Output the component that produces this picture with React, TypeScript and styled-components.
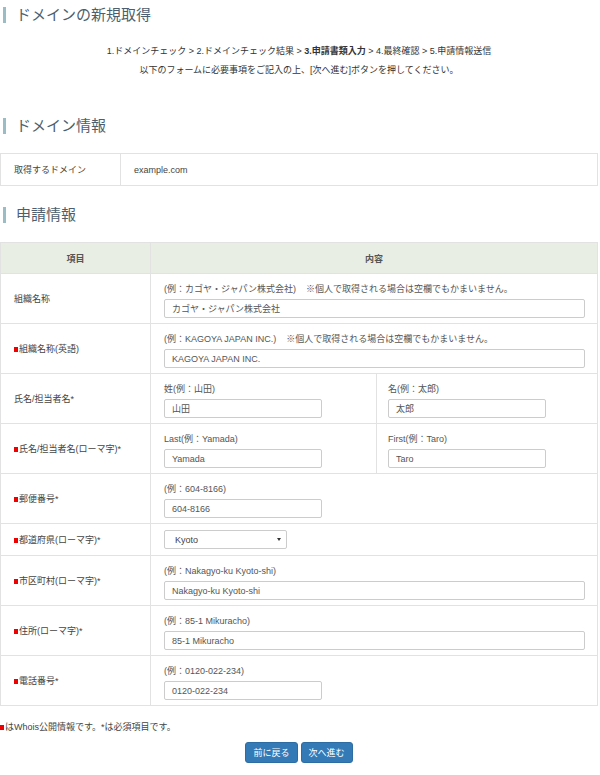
import React from 'react';
import styled, { createGlobalStyle } from 'styled-components';

const GlobalStyle = createGlobalStyle`
  html, body {
    margin: 0;
    padding: 0;
    background: #fff;
  }
  body {
    font-family: "Liberation Sans", "Noto Sans CJK JP", sans-serif;
    font-size: 9px;
    color: #444;
  }
`;

const Page = styled.div`
  width: 598px;
  padding-top: 7px;
  padding-bottom: 12px;
`;

const SectionTitle = styled.h2<{ $gapTop?: number }>`
  margin: ${({ $gapTop }) => $gapTop ?? 0}px 0 0 3px;
  padding-left: 10px;
  border-left: 3px solid #9bbcc5;
  font-size: 15px;
  line-height: 16px;
  font-weight: normal;
  color: #4d5f6e;
`;

const Steps = styled.div`
  margin-top: 19px;
  text-align: center;
  line-height: 19px;
  color: #333;
`;

const Table = styled.table<{ $gapTop: number }>`
  width: 598px;
  margin-top: ${({ $gapTop }) => $gapTop}px;
  border-collapse: collapse;
  table-layout: fixed;
`;

const Th = styled.th`
  height: 30px;
  padding: 0;
  background: #e9eee5;
  border: 1px solid #e2e2e2;
  font-weight: bold;
  color: #555;
  text-align: center;
`;

const Label = styled.td`
  height: 31px;
  padding: 0 13px;
  border: 1px solid #e2e2e2;
  color: #444;
  vertical-align: middle;
`;

const Cell = styled.td<{ $compact?: boolean; $tight?: boolean }>`
  padding: ${({ $compact }) => ($compact ? '6px 13px 6px' : '8px 12px 5px')};
  padding-left: ${({ $tight }) => ($tight ? 11 : 13)}px;
  border: 1px solid #e2e2e2;
  vertical-align: top;
`;

const Whois = styled.span`
  display: inline-block;
  width: 4px;
  height: 5px;
  margin-right: 1px;
  background: #ee0000;
  vertical-align: 0;
`;

const Hint = styled.div`
  line-height: 14px;
  margin-bottom: 3px;
  color: #555;
  white-space: nowrap;
`;

const Note = styled.span`
  margin-left: 10px;
`;

const Input = styled.input<{ $w?: number }>`
  box-sizing: border-box;
  display: block;
  width: ${({ $w }) => ($w ? `${$w}px` : '100%')};
  height: 19px;
  padding: 0 7px;
  border: 1px solid #ccc;
  border-radius: 2px;
  font: inherit;
  color: #555;
  background: #fff;
  outline: none;
`;

const SelectWrap = styled.div`
  position: relative;
  width: 123px;
  &::after {
    content: '';
    position: absolute;
    right: 6px;
    top: 8px;
    border-left: 2px solid transparent;
    border-right: 2px solid transparent;
    border-top: 3px solid #333;
  }
`;

const Select = styled.select`
  box-sizing: border-box;
  appearance: none;
  width: 100%;
  height: 19px;
  padding: 0 10px;
  border: 1px solid #ccc;
  border-radius: 2px;
  font: inherit;
  color: #444;
  background: #fff;
  outline: none;
`;

const Legend = styled.p`
  margin: 14px 0 0;
  line-height: 14px;
  color: #444;
`;

const Buttons = styled.div`
  display: flex;
  justify-content: center;
  gap: 3px;
  margin-top: 8px;
`;

const Button = styled.button`
  height: 21px;
  padding: 0 7px;
  border: 1px solid #2e6da4;
  border-radius: 3px;
  background: #337ab7;
  color: #fff;
  font: inherit;
  font-size: 9px;
  cursor: pointer;
`;

type Row = {
  label: string;
  whois?: boolean;
  required?: boolean;
  hint?: string;
  note?: string;
  value?: string;
  width?: number;
  select?: boolean;
  split?: [string, string, string, string];
};

const rows: Row[] = [
  { label: '組織名称', hint: '(例：カゴヤ・ジャパン株式会社)', note: '※個人で取得される場合は空欄でもかまいません。', value: 'カゴヤ・ジャパン株式会社' },
  { label: '組織名称(英語)', whois: true, hint: '(例：KAGOYA JAPAN INC.)', note: '※個人で取得される場合は空欄でもかまいません。', value: 'KAGOYA JAPAN INC.' },
  { label: '氏名/担当者名', required: true, split: ['姓(例：山田)', '山田', '名(例：太郎)', '太郎'] },
  { label: '氏名/担当者名(ローマ字)', whois: true, required: true, split: ['Last(例：Yamada)', 'Yamada', 'First(例：Taro)', 'Taro'] },
  { label: '郵便番号', whois: true, required: true, hint: '(例：604-8166)', value: '604-8166', width: 158 },
  { label: '都道府県(ローマ字)', whois: true, required: true, select: true },
  { label: '市区町村(ローマ字)', whois: true, required: true, hint: '(例：Nakagyo-ku Kyoto-shi)', value: 'Nakagyo-ku Kyoto-shi' },
  { label: '住所(ローマ字)', whois: true, required: true, hint: '(例：85-1 Mikuracho)', value: '85-1 Mikuracho' },
  { label: '電話番号', whois: true, required: true, hint: '(例：0120-022-234)', value: '0120-022-234', width: 158 },
];

export default function App() {
  return (
    <Page>
      <GlobalStyle />
      <SectionTitle>ドメインの新規取得</SectionTitle>
      <Steps>
        1.ドメインチェック &gt; 2.ドメインチェック結果 &gt; <b>3.申請書類入力</b> &gt; 4.最終確認 &gt; 5.申請情報送信
        <br />
        以下のフォームに必要事項をご記入の上、[次へ進む]ボタンを押してください。
      </Steps>

      <SectionTitle $gapTop={38}>ドメイン情報</SectionTitle>
      <Table $gapTop={19}>
        <colgroup>
          <col style={{ width: 120 }} />
          <col />
        </colgroup>
        <tbody>
          <tr>
            <Label>取得するドメイン</Label>
            <Label>example.com</Label>
          </tr>
        </tbody>
      </Table>

      <SectionTitle $gapTop={21}>申請情報</SectionTitle>
      <Table $gapTop={19}>
        <colgroup>
          <col style={{ width: 150 }} />
          <col style={{ width: 226 }} />
          <col />
        </colgroup>
        <thead>
          <tr>
            <Th>項目</Th>
            <Th colSpan={2}>内容</Th>
          </tr>
        </thead>
        <tbody>
          {rows.map((r) => (
            <tr key={r.label}>
              <Label>
                {r.whois && <Whois />}
                {r.label}
                {r.required && '*'}
              </Label>
              {r.split ? (
                <>
                  <Cell>
                    <Hint>{r.split[0]}</Hint>
                    <Input $w={158} defaultValue={r.split[1]} />
                  </Cell>
                  <Cell $tight>
                    <Hint>{r.split[2]}</Hint>
                    <Input $w={158} defaultValue={r.split[3]} />
                  </Cell>
                </>
              ) : r.select ? (
                <Cell colSpan={2} $compact>
                  <SelectWrap>
                    <Select defaultValue="Kyoto">
                      <option>Kyoto</option>
                    </Select>
                  </SelectWrap>
                </Cell>
              ) : (
                <Cell colSpan={2}>
                  <Hint>
                    {r.hint}
                    {r.note && <Note>{r.note}</Note>}
                  </Hint>
                  <Input $w={r.width} defaultValue={r.value} />
                </Cell>
              )}
            </tr>
          ))}
        </tbody>
      </Table>

      <Legend>
        <Whois />
        はWhois公開情報です。*は必須項目です。
      </Legend>
      <Buttons>
        <Button>前に戻る</Button>
        <Button>次へ進む</Button>
      </Buttons>
    </Page>
  );
}
